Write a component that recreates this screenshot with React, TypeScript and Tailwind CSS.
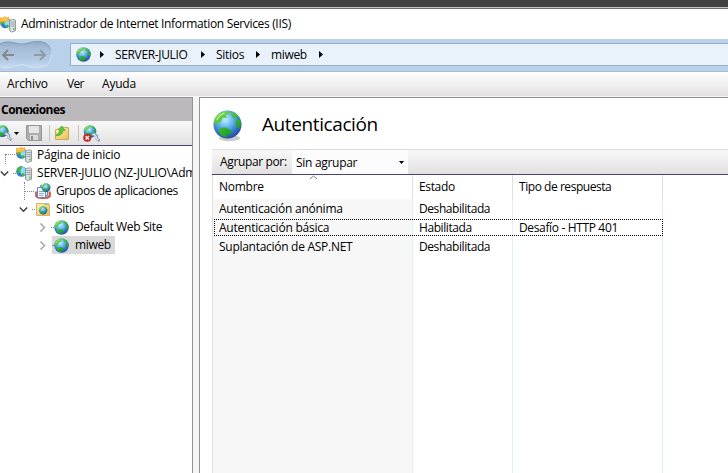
import type { ReactNode } from "react";

function Defs() {
  return (
    <svg className="absolute h-0 w-0" aria-hidden="true">
      <defs>
        <radialGradient id="ocean" cx="0.42" cy="0.32" r="0.72">
          <stop offset="0" stopColor="#c3edff" />
          <stop offset="0.35" stopColor="#6cbcf0" />
          <stop offset="0.72" stopColor="#2f72c8" />
          <stop offset="1" stopColor="#26429c" />
        </radialGradient>
        <linearGradient id="land" x1="0" y1="0" x2="0.7" y2="1">
          <stop offset="0" stopColor="#9be052" />
          <stop offset="0.5" stopColor="#3cbf30" />
          <stop offset="1" stopColor="#1a8c2c" />
        </linearGradient>
        <linearGradient id="folder" x1="0" y1="0" x2="1" y2="1">
          <stop offset="0" stopColor="#fff3b5" />
          <stop offset="1" stopColor="#e9bd5a" />
        </linearGradient>
        <linearGradient id="tower" x1="0" y1="0" x2="1" y2="0">
          <stop offset="0" stopColor="#b4bcc4" />
          <stop offset="0.4" stopColor="#e9edf0" />
          <stop offset="1" stopColor="#c3cad0" />
        </linearGradient>
        <linearGradient id="pill" x1="0" y1="0" x2="0" y2="1">
          <stop offset="0" stopColor="#91a9c4" />
          <stop offset="0.25" stopColor="#a6bdd7" />
          <stop offset="0.7" stopColor="#b3cae4" />
          <stop offset="1" stopColor="#c9dcf0" />
        </linearGradient>
      </defs>
    </svg>
  );
}

function GlobeShape() {
  return (
    <g>
      <circle cx="16" cy="15" r="14.5" fill="url(#ocean)" />
      <path d="M2 11C4 6 8 2 14 1L18 2L17 4L14 5L15 8L11 8L9 12L5 15L3 14Z M6 21L10 18L15 18L20 21L21 24L17 25L15 28L10 27Z M19 1.5C22 2 25 4 27 6L25 9L22 8L20 5Z M24 12L28 9L30 12V16L27 19L25 17Z" fill="url(#land)" />
      <path d="M5 10C7 6 10 4 13 3" fill="none" stroke="#d2f8b0" strokeWidth="1.2" opacity=".8" />
    </g>
  );
}

function Globe({ className }: { className: string }) {
  return <svg viewBox="1 0 30 30" className={className}><GlobeShape /></svg>;
}

function ServerIcon({ star = false, className = "h-4 w-4" }: { star?: boolean; className?: string }) {
  return (
    <svg viewBox="0 0 16 16" className={className}>
      <circle cx="5.5" cy="6.5" r="5.3" fill="#2f7fd3" />
      <path d="M5 2a4.5 4.5 0 0 1 5 3v5l-3 1-3-4z" fill="#8fdcfa" />
      <path d="M.8 4.5C1.6 2.5 3 1.4 5 1.2L6 3 4 5l1 2-2 1-2-1zM5 9l3-1 1 2-2 1.6z" fill="#3fb93a" />
      {star && <path d="M0 1.3L2.6 1.7L4.6 0L6.5 1.3L9 .8L8.5 3.5L6 4.3L5 6L3 4.8L.6 6Z" fill="#ffc53d" stroke="#ee981c" strokeWidth="0.6" />}
      <path d="M9.5 3.5L14.5 2.8L15.5 3.8V14.3L11 15.6L9.5 14Z" fill="url(#tower)" stroke="#818991" strokeWidth="0.8" />
      <path d="M10.8 5.5h3.7M10.8 7.5h3.7M10.8 9.5h3.7" stroke="#858f98" strokeWidth="0.8" />
      <rect x="12.8" y="11.7" width="1.7" height="1.7" fill="#51cc31" />
    </svg>
  );
}

function PoolsIcon() {
  return (
    <svg viewBox="0 0 16 16" className="h-4 w-4">
      <path d="M1 8.5v4.5c1.5 2.8 12.5 2.8 14 0V8.5" fill="#e9b5ae" stroke="#c9483e" strokeWidth="1.6" />
      <path d="M5.5 2.5h5l2 2v8h-7z" fill="#fff" stroke="#6c87b0" />
      <path d="M2.5 4.5h6l2 2v8h-8z" fill="#f5f9fe" stroke="#6c87b0" />
      <path d="M4 8.5h5M4 10.5h5M4 12.5h4" stroke="#8ca9d2" />
      <g transform="translate(6 0) scale(.31)"><GlobeShape /></g>
    </svg>
  );
}

function SitesIcon() {
  return (
    <svg viewBox="0 0 16 16" className="h-4 w-4">
      <path d="M1.5 2.5h7l1 1h5v11h-13z" fill="url(#folder)" stroke="#d8b265" />
      <path d="M9 2.5h5" stroke="#91bde5" />
      <g transform="translate(3.5 5) scale(.29)"><GlobeShape /></g>
    </svg>
  );
}

function ConnectIcon({ cancel = false, className = "h-4 w-4" }: { cancel?: boolean; className?: string }) {
  return (
    <svg viewBox="0 0 16 16" className={className}>
      <g transform="scale(.41)"><GlobeShape /></g>
      <path d="M8.5 9.5l2-1.5 2.5 2.5-.5 2 3 2.5" fill="none" stroke="#8299ae" strokeWidth="2.6" />
      <path d="M9 9.5l1.5-.8 2 2-.5 1.5 2.5 2" fill="none" stroke="#dce8f1" strokeWidth="1.3" />
      {cancel && <><circle cx="4" cy="12" r="3.8" fill="#c92322" /><path d="M2.4 10.4l3.2 3.2m0-3.2l-3.2 3.2" stroke="white" strokeWidth="1.3" /></>}
    </svg>
  );
}

function SaveIcon() {
  return (
    <svg viewBox="0 0 16 16" className="h-4 w-4">
      <path d="M.5.5h15v15h-13l-2-2z" fill="#adadad" stroke="#969696" />
      <path d="M3 1h10v7H3z" fill="#e6e6e6" />
      <path d="M4 10h8v5H4z" fill="#dadada" />
      <path d="M5 11h2v4H5z" fill="#8e8e8e" />
    </svg>
  );
}

function UpFolderIcon() {
  return (
    <svg viewBox="0 0 16 16" className="h-4 w-4">
      <path d="M1.5 4.5h7l1-2h5v12h-13z" fill="url(#folder)" stroke="#cfa957" />
      <path d="M2 9.5c2.4-.6 3.6-2 3.8-4.5L4 4.5 8 1l3 4.5-2-.2c-.2 3.4-2.6 5.4-6.500 5.500z" fill="#5cc938" stroke="#349a27" strokeWidth=".6" />
    </svg>
  );
}

function Navigation() {
  return (
    <svg viewBox="0 0 52 30" className="h-[30px] w-[52px] shrink-0">
      <path d="M0 4C7 0 14 3 20 4C26 5 33 0 42 2C48 3 51 9 51 15C51 22 48 26 42 27C32 30 27 24 20 25C12 26 5 31 0 26Z" fill="url(#pill)" />
      <path d="M0 4C7 0 14 3 20 4C26 5 33 0 42 2C47 3 50 6 50 10" fill="none" stroke="#8198b2" strokeWidth="1" />
      <path d="M51 15C51 22 48 26 42 27C32 30 27 24 20 25C12 26 5 31 0 26" fill="none" stroke="#d3e3f3" strokeWidth="1" />
      <path d="M14 15H3M8 10L3 15L8 20" fill="none" stroke="#85878c" strokeWidth="2" />
      <path d="M34 15H45M40 10L45 15L40 20" fill="none" stroke="#929ba5" strokeWidth="2" />
    </svg>
  );
}

function Crumb({ className, children }: { className: string; children: ReactNode }) {
  return <span className={`flex shrink-0 items-center whitespace-nowrap ${className}`}>{children}</span>;
}

function CrumbArrow() {
  return <svg viewBox="0 0 4 7" className="h-[7px] w-1 shrink-0"><path d="M0 0L4 3.5L0 7Z" /></svg>;
}

function DropArrow() {
  return <svg viewBox="0 0 5 3" className="h-[3px] w-[5px] shrink-0"><path d="M0 0H5L2.5 3Z" /></svg>;
}

function Chevron({ open = false }: { open?: boolean }) {
  return (
    <svg viewBox="0 0 9 9" className="h-[9px] w-[9px] shrink-0">
      <path d={open ? "M.8 2.5L4.5 6.200L8.200 2.500" : "M2.500 .5L6.500 4.500L2.500 8.500"} fill="none" stroke={open ? "#424242" : "#a6a6a6"} strokeWidth="1.5" />
    </svg>
  );
}

function Dots({ className }: { className: string }) {
  return <span className={`shrink-0 border-t border-dotted border-[#858585] ${className}`} />;
}

const columns = "grid grid-cols-[200px_100px_150px]";

export default function App() {
  return (
    <div className="flex h-[473px] w-[728px] flex-col overflow-hidden bg-white font-['Open_Sans','Noto_Sans',sans-serif] text-[12px] leading-[18px] text-black">
      <Defs />
      <div className="h-[9px] shrink-0 border-b border-[#6b6b6b] bg-[#414141] pt-[7px]"><div className="h-px bg-[#c5c5c5]" /></div>
      <header className="flex h-[30px] shrink-0 items-center">
        <ServerIcon star className="h-[17px] w-4" />
        <span className="ml-[5px] whitespace-nowrap tracking-[-0.34px]">Administrador de Internet Information Services (IIS)</span>
      </header>
      <nav className="flex h-[33px] shrink-0 items-start border-b border-[#a3bbd3] bg-[#b9d1ea] pt-px">
        <Navigation />
        <div className="mt-[3px] ml-[18px] flex h-[23px] flex-1 items-center border border-r-0 border-[#9aafc5] bg-[#e9f1fa] pl-[5px]">
          <Globe className="mr-[9px] h-[15px] w-[15px] shrink-0" />
          <CrumbArrow />
          <Crumb className="ml-[11px] w-[86px] tracking-[-0.35px]">SERVER-JULIO</Crumb>
          <CrumbArrow />
          <Crumb className="ml-[11px] w-[40px] tracking-[-0.3px]">Sitios</Crumb>
          <CrumbArrow />
          <Crumb className="ml-[11px] w-[48px] tracking-[-0.35px]">miweb</Crumb>
          <CrumbArrow />
        </div>
      </nav>
      <nav className="flex h-6 shrink-0 items-center bg-linear-to-b from-white to-[#e3e1e2] pl-[7px]">
        <span className="w-[60px] tracking-[-0.15px]">Archivo</span><span className="w-[35px] tracking-[-0.7px]">Ver</span><span className="tracking-[-0.2px]">Ayuda</span>
      </nav>
      <main className="flex min-h-0 flex-1 bg-[#f5f5f5] pt-px">
        <aside className="flex w-[193px] shrink-0 flex-col border-t border-r border-[#929292] bg-white">
          <h2 className="flex h-[23px] shrink-0 items-center bg-[#bcb9bc] pl-px font-bold tracking-[-0.5px]">Conexiones</h2>
          <div className="flex h-[25px] shrink-0 items-center border-b border-[#48436b] bg-linear-to-b from-[#f8f8f8] to-[#e3e1e2]">
            <ConnectIcon className="-ml-[4px] h-4 w-4 shrink-0" /><span className="ml-[2px]"><DropArrow /></span>
            <span className="ml-[7px]"><SaveIcon /></span>
            <span className="ml-[7px] h-4 w-px bg-[#c5c5b6]" /><span className="ml-[4px]"><UpFolderIcon /></span>
            <span className="ml-[8px] h-4 w-px bg-[#c5c5b6]" /><ConnectIcon cancel className="ml-[4px] h-[17px] w-[17px]" />
          </div>
          <div className="flex flex-col overflow-hidden whitespace-nowrap">
            <div className="flex h-[18px] items-center"><Dots className="ml-[5px] h-[10px] w-[10px] self-end border-l" /><ServerIcon star className="ml-px h-4 w-4 shrink-0" /><span className="ml-[5px] tracking-[-0.25px]">Página de inicio</span></div>
            <div className="flex h-[18px] items-center"><Chevron open /><Dots className="ml-[4px] w-[3px]" /><ServerIcon className="h-4 w-4 shrink-0" /><span className="ml-[5px] tracking-[-0.2px]">SERVER-JULIO (NZ-JULIO\Administrador)</span></div>
            <div className="flex h-[18px] items-center"><span className="ml-6 h-[18px] w-px shrink-0 border-l border-dotted border-[#858585]" /><Dots className="w-[9px]" /><span className="ml-px shrink-0"><PoolsIcon /></span><span className="ml-[5px] tracking-[-0.36px]">Grupos de aplicaciones</span></div>
            <div className="flex h-[18px] items-center"><span className="ml-[19px] flex"><Chevron open /></span><Dots className="ml-[4px] w-[3px]" /><span className="shrink-0"><SitesIcon /></span><span className="ml-[5px] tracking-[-0.3px]">Sitios</span></div>
            <div className="flex h-[18px] items-center"><span className="ml-[38px] flex"><Chevron /></span><Dots className="ml-[4px] w-[3px]" /><Globe className="h-[15px] w-[15px] shrink-0" /><span className="ml-[6px] tracking-[-0.36px]">Default Web Site</span></div>
            <div className="flex h-[18px] items-center"><span className="ml-[38px] flex"><Chevron /></span><span className="ml-[5px] flex h-[18px] w-[63px] items-center bg-[#d9d9d9]"><Dots className="w-[2px]" /><Globe className="h-[15px] w-[15px] shrink-0" /><span className="ml-[6px] tracking-[-0.35px]">miweb</span></span></div>
          </div>
        </aside>
        <section className="ml-[6px] min-w-0 flex-1 border-t border-l border-[#929292] bg-white pl-3">
          <div className="flex h-[51px] items-center">
            <svg viewBox="0 0 32 34" className="mt-[5px] h-[33px] w-[31px] shrink-0"><ellipse cx="18" cy="29" rx="11" ry="3" fill="#a7a7a7" opacity=".6" /><GlobeShape /></svg>
            <h1 className="ml-[19px] text-[19px] leading-[26px] tracking-[-0.4px]">Autenticación</h1>
          </div>
          <div className="flex h-[26px] items-center border-t border-b border-t-[#dedede] border-b-[#48436b] bg-linear-to-b from-[#f8f8f8] to-[#e3e1e2] pl-2 whitespace-nowrap">
            <span className="w-[72px] tracking-[-0.36px]">Agrupar por:</span>
            <div className="flex h-[24px] w-[116px] items-center justify-between bg-[#fcfcfc] pr-1 pl-1"><span className="pt-px tracking-[-0.3px]">Sin agrupar</span><DropArrow /></div>
          </div>
          <div className="relative flex h-[298px] w-[451px] flex-col border-l border-[#dedede] whitespace-nowrap">
            <svg viewBox="0 0 9 5" className="absolute top-0 left-[96px] h-[5px] w-[9px]"><path d="M1 4L4.5 1L8 4" fill="none" stroke="#7c7c7c" /></svg>
            <div className={`${columns} h-6 shrink-0 items-center`}>
              <span className="h-6 border-r border-[#dedede] pt-[3px] pl-[6px] tracking-[-0.25px]">Nombre</span><span className="h-6 border-r border-[#dedede] pt-[3px] pl-[6px] tracking-[-0.35px]">Estado</span><span className="h-6 border-r border-[#dedede] pt-[3px] pl-[6px] tracking-[-0.45px]">Tipo de respuesta</span>
            </div>
            <div className={`${columns} flex-1`}>
              <div className="border-r border-[#e4eefb] bg-[#f7f7f7] pl-[6px] leading-[19px]"><div className="tracking-[-0.25px]">Autenticación anónima</div><div className="tracking-[-0.22px]">Autenticación básica</div><div className="tracking-[-0.28px]">Suplantación de ASP.NET</div></div>
              <div className="border-r border-[#e4eefb] pl-[6px] leading-[19px] tracking-[-0.42px]"><div>Deshabilitada</div><div>Habilitada</div><div>Deshabilitada</div></div>
              <div className="border-r border-[#e4eefb] pl-[6px] leading-[19px]"><div className="pt-[19px] tracking-[-0.35px]">Desafío - HTTP 401</div></div>
            </div>
            <div className="pointer-events-none absolute top-[44px] left-px h-[17px] w-[449px] border border-dotted border-black" />
          </div>
        </section>
      </main>
    </div>
  );
}
